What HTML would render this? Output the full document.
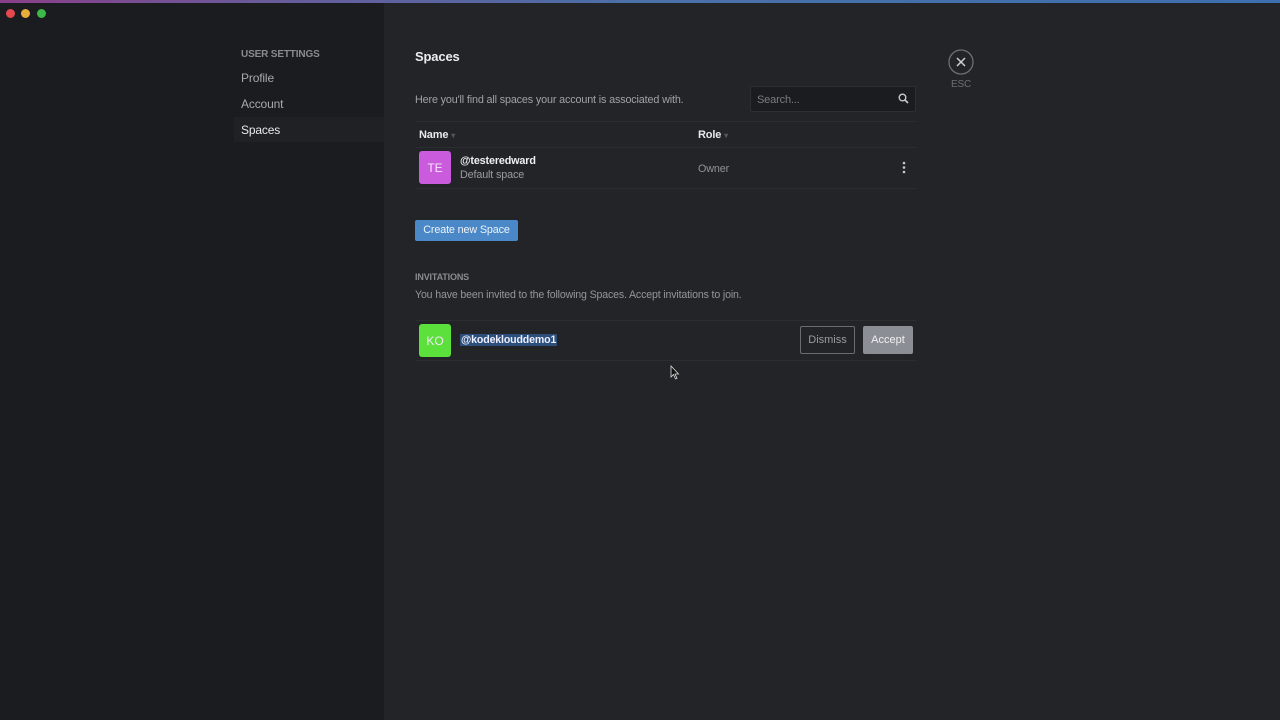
<!DOCTYPE html>
<html><head><style>
*{margin:0;padding:0;box-sizing:border-box}
body{width:1280px;height:720px;overflow:hidden;background:#222427;font-family:"Liberation Sans",sans-serif;position:relative}
.top{position:absolute;left:0;top:0;width:1280px;height:3px;background:linear-gradient(90deg,#8a3f8a,#6a5a9a 20%,#4a70a8 50%,#3d6fae)}
.left{position:absolute;left:0;top:3px;width:384px;height:717px;background:#1b1c20}
.dot{position:absolute;top:9px;width:9px;height:9px;border-radius:50%}
.a{position:absolute;white-space:nowrap;letter-spacing:-0.15px}
.nav{left:241px;font-size:12px;color:#a8a9ad}
.line{position:absolute;height:1px;background:#2b2d31}
.av{position:absolute;width:32px;height:33px;border-radius:3px;color:#f2e8f5;font-size:12px;display:flex;align-items:center;justify-content:center}
</style></head><body>
<div class="top"></div>
<div class="left"></div>
<div class="dot" style="left:6px;background:#e5484f"></div>
<div class="dot" style="left:21px;background:#e8ac3a"></div>
<div class="dot" style="left:37px;background:#3cba48"></div>
<div class="a" style="left:241px;top:49px;font-size:10px;font-weight:bold;color:#8a8b90">USER SETTINGS</div>
<div class="a nav" style="top:71px">Profile</div>
<div class="a nav" style="top:97px">Account</div>
<div style="position:absolute;left:234px;top:117px;width:150px;height:25px;background:#202125"></div>
<div class="a nav" style="top:123px;color:#e8e9eb">Spaces</div>

<div class="a" style="left:415px;top:49px;font-size:13px;font-weight:bold;color:#ececee">Spaces</div>
<div class="a" style="left:415px;top:94px;font-size:10.8px;color:#a0a2a6">Here you'll find all spaces your account is associated with.</div>
<div style="position:absolute;left:750px;top:86px;width:166px;height:26px;background:#1b1c20;border:1px solid #2c2e32;border-radius:2px"></div>
<div class="a" style="left:757px;top:94px;font-size:11px;color:#7a7c80">Search...</div>
<svg style="position:absolute;left:898px;top:93px" width="11" height="11" viewBox="0 0 11 11"><circle cx="4.5" cy="4.5" r="3.3" fill="none" stroke="#c8c9cc" stroke-width="1.4"/><path d="M7 7L10 10" stroke="#c8c9cc" stroke-width="1.6"/></svg>
<svg style="position:absolute;left:948px;top:49px" width="26" height="26" viewBox="0 0 26 26"><circle cx="13" cy="13" r="12" fill="none" stroke="#6d6f73" stroke-width="1.3"/><path d="M9 9L17 17M17 9L9 17" stroke="#d0d1d4" stroke-width="1.5"/></svg>
<div class="a" style="left:951px;top:79px;font-size:10px;color:#6d6f73">ESC</div>

<div class="line" style="left:415px;top:121px;width:502px"></div>
<div class="a" style="left:419px;top:129px;font-size:11px;font-weight:bold;color:#e8e9eb">Name <span style="color:#555;font-size:8px">▾</span></div>
<div class="a" style="left:698px;top:129px;font-size:11px;font-weight:bold;color:#e8e9eb">Role <span style="color:#555;font-size:8px">▾</span></div>
<div class="line" style="left:415px;top:147px;width:502px"></div>
<div class="av" style="left:419px;top:151px;background:#c95bdc">TE</div>
<div class="a" style="left:460px;top:155px;font-size:10.8px;font-weight:bold;color:#f0f0f2">@testeredward</div>
<div class="a" style="left:460px;top:169px;font-size:10.8px;color:#9a9ca0">Default space</div>
<div class="a" style="left:698px;top:163px;font-size:10.8px;color:#909296">Owner</div>
<svg style="position:absolute;left:902px;top:161px" width="4" height="13"><circle cx="2" cy="2" r="1.3" fill="#c8c9cc"/><circle cx="2" cy="6.5" r="1.3" fill="#c8c9cc"/><circle cx="2" cy="11" r="1.3" fill="#c8c9cc"/></svg>
<div class="line" style="left:415px;top:188px;width:502px"></div>

<div style="position:absolute;left:415px;top:220px;width:103px;height:21px;background:#4a88c7;border-radius:2px;color:#eef3f9;font-size:10.8px;text-align:center;line-height:21px;letter-spacing:-0.15px">Create new Space</div>

<div class="a" style="left:415px;top:272px;font-size:9px;font-weight:bold;color:#8a8b90">INVITATIONS</div>
<div class="a" style="left:415px;top:289px;font-size:10.6px;color:#94969a">You have been invited to the following Spaces. Accept invitations to join.</div>
<div class="line" style="left:415px;top:320px;width:502px"></div>
<div class="av" style="left:419px;top:324px;background:#5be03c">KO</div>
<div class="a" style="left:460px;top:334px;font-size:10.6px;font-weight:bold;color:#eef;background:#2b4f7a;padding:0 1px">@kodeklouddemo1</div>
<div style="position:absolute;left:800px;top:326px;width:55px;height:28px;border:1px solid #6a6c70;border-radius:2px;color:#9a9ca0;font-size:11px;text-align:center;line-height:27px">Dismiss</div>
<div style="position:absolute;left:863px;top:326px;width:50px;height:28px;background:#8c8e96;border-radius:2px;color:#f0f0f2;font-size:11px;text-align:center;line-height:29px">Accept</div>
<div class="line" style="left:415px;top:360px;width:502px"></div>
<svg style="position:absolute;left:670px;top:365px" width="10" height="15" viewBox="0 0 10 15"><path d="M1 1L1 12L3.5 9.5L5.5 14L7 13.3L5 9H8.5Z" fill="#111" stroke="#ddd" stroke-width="0.8"/></svg>
</body></html>
